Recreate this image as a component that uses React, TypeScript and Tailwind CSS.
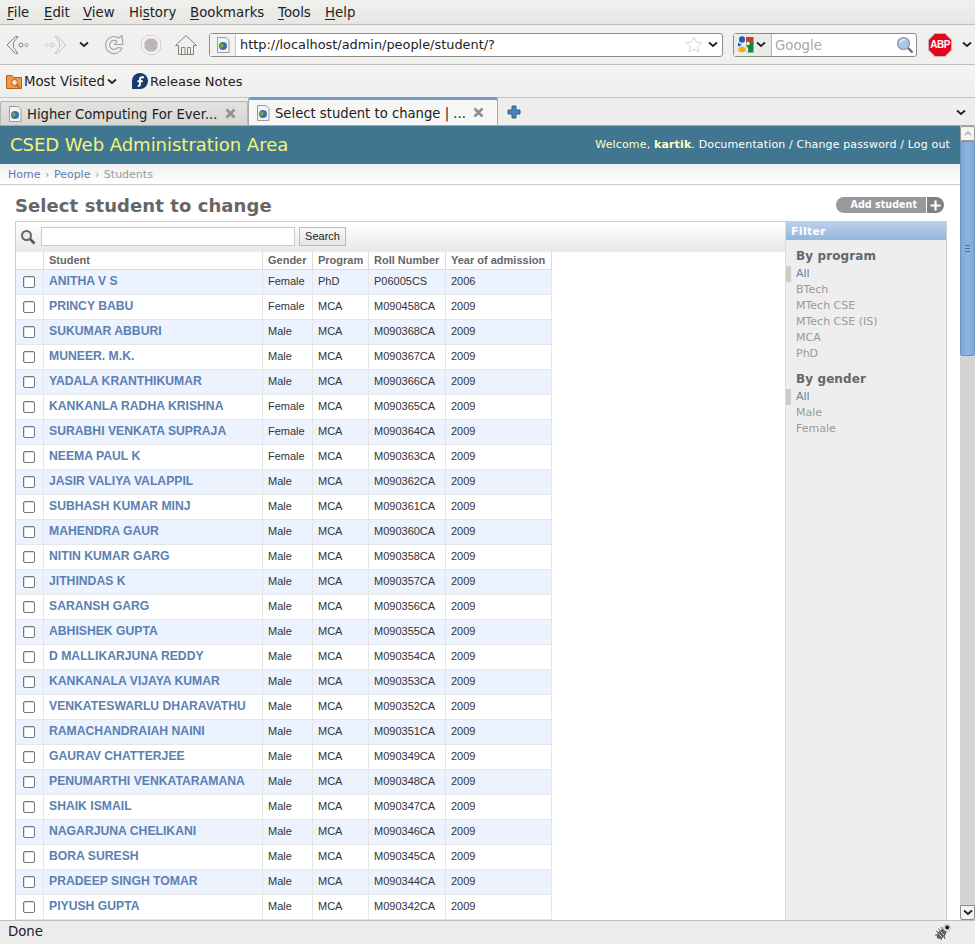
const DEJAVU = "font-['DejaVu_Sans',sans-serif]"

const MENU = [
  { pre: "", key: "F", post: "ile", w: "w-[37px]" },
  { pre: "", key: "E", post: "dit", w: "w-[39px]" },
  { pre: "", key: "V", post: "iew", w: "w-[46px]" },
  { pre: "Hi", key: "s", post: "tory", w: "w-[61px]" },
  { pre: "", key: "B", post: "ookmarks", w: "w-[88px]" },
  { pre: "", key: "T", post: "ools", w: "w-[47px]" },
  { pre: "", key: "H", post: "elp", w: "w-[40px]" },
]

const STUDENTS: [string, string, string, string, string][] = [
  ["ANITHA V S", "Female", "PhD", "P06005CS", "2006"],
  ["PRINCY BABU", "Female", "MCA", "M090458CA", "2009"],
  ["SUKUMAR ABBURI", "Male", "MCA", "M090368CA", "2009"],
  ["MUNEER. M.K.", "Male", "MCA", "M090367CA", "2009"],
  ["YADALA KRANTHIKUMAR", "Male", "MCA", "M090366CA", "2009"],
  ["KANKANLA RADHA KRISHNA", "Female", "MCA", "M090365CA", "2009"],
  ["SURABHI VENKATA SUPRAJA", "Female", "MCA", "M090364CA", "2009"],
  ["NEEMA PAUL K", "Female", "MCA", "M090363CA", "2009"],
  ["JASIR VALIYA VALAPPIL", "Male", "MCA", "M090362CA", "2009"],
  ["SUBHASH KUMAR MINJ", "Male", "MCA", "M090361CA", "2009"],
  ["MAHENDRA GAUR", "Male", "MCA", "M090360CA", "2009"],
  ["NITIN KUMAR GARG", "Male", "MCA", "M090358CA", "2009"],
  ["JITHINDAS K", "Male", "MCA", "M090357CA", "2009"],
  ["SARANSH GARG", "Male", "MCA", "M090356CA", "2009"],
  ["ABHISHEK GUPTA", "Male", "MCA", "M090355CA", "2009"],
  ["D MALLIKARJUNA REDDY", "Male", "MCA", "M090354CA", "2009"],
  ["KANKANALA VIJAYA KUMAR", "Male", "MCA", "M090353CA", "2009"],
  ["VENKATESWARLU DHARAVATHU", "Male", "MCA", "M090352CA", "2009"],
  ["RAMACHANDRAIAH NAINI", "Male", "MCA", "M090351CA", "2009"],
  ["GAURAV CHATTERJEE", "Male", "MCA", "M090349CA", "2009"],
  ["PENUMARTHI VENKATARAMANA", "Male", "MCA", "M090348CA", "2009"],
  ["SHAIK ISMAIL", "Male", "MCA", "M090347CA", "2009"],
  ["NAGARJUNA CHELIKANI", "Male", "MCA", "M090346CA", "2009"],
  ["BORA SURESH", "Male", "MCA", "M090345CA", "2009"],
  ["PRADEEP SINGH TOMAR", "Male", "MCA", "M090344CA", "2009"],
  ["PIYUSH GUPTA", "Male", "MCA", "M090342CA", "2009"],
]

function Chevron({ className = "" }: { className?: string }) {
  return (
    <svg width="10" height="7" viewBox="0 0 10 7" className={className}>
      <path d="M1 1.5 L5 5 L9 1.5" fill="none" stroke="#222" strokeWidth="1.8" />
    </svg>
  )
}

function Favicon() {
  return (
    <svg width="14" height="16" viewBox="0 0 14 16" className="shrink-0">
      <path d="M1.5 .5H10L13 3.5V15.5H1.5Z" fill="#f4f4f2" stroke="#9a9a96" />
      <circle cx="7" cy="9" r="4" fill="#3f6fa8" />
      <path d="M5 6.5c2 0 3 1 2.5 2.5S5 10 5.5 11.5C4 10.5 3.5 8 5 6.5Z" fill="#7fa83f" />
    </svg>
  )
}

function BackIcon() {
  return (
    <svg width="24" height="20" viewBox="0 0 24 20">
      <path d="M9.5 1.5 L1 10 L9.5 18.5 L12 18.5 L7.5 12.5 L7.5 7.5 L12 1.5Z" fill="#e8e8e6" stroke="#84847f" strokeLinejoin="round" />
      <path d="M3.5 10 L8 5 M3.5 10 L8 15" stroke="#fff" strokeWidth="1" />
      <circle cx="15" cy="10" r="2" fill="#f2f2f0" stroke="#84847f" />
      <circle cx="20.5" cy="10" r="1.6" fill="none" stroke="#a0a09c" />
    </svg>
  )
}

function ForwardIcon() {
  return (
    <svg width="24" height="20" viewBox="0 0 24 20">
      <path d="M14.5 1.5 L23 10 L14.5 18.5 L12 18.5 L16.5 12.5 L16.5 7.5 L12 1.5Z" fill="#ececea" stroke="#c6c6c2" strokeLinejoin="round" />
      <circle cx="9" cy="10" r="2" fill="none" stroke="#c6c6c2" />
      <circle cx="3.5" cy="10" r="1.6" fill="none" stroke="#d2d2ce" />
    </svg>
  )
}

function ReloadIcon() {
  return (
    <svg width="22" height="22" viewBox="0 0 22 22">
      <path d="M19 14A8.5 8.5 0 1 1 16 4.2L19 1.5L20 10.5H11.5L14.2 7.6A4.5 4.5 0 1 0 14.8 13.5Z" fill="#f0f0ee" stroke="#a2a29e" strokeWidth="1.1" strokeLinejoin="round" />
    </svg>
  )
}

function StopIcon() {
  return (
    <svg width="22" height="22" viewBox="0 0 22 22">
      <path d="M7 1.5H15L20.5 7V15L15 20.5H7L1.5 15V7Z" fill="#f4f4f2" stroke="#d4d0d0" />
      <path d="M8 4.5H14L17.5 8V14L14 17.5H8L4.5 14V8Z" fill="#bcb6b6" />
    </svg>
  )
}

function HomeIcon() {
  return (
    <svg width="22" height="22" viewBox="0 0 22 22">
      <path d="M.5 11.5 L11 1.5 L21.5 11.5 L18.5 11.5 L18.5 20.5 L3.5 20.5 L3.5 11.5Z" fill="#f0f0ee" stroke="#84847f" strokeLinejoin="round" />
      <path d="M6.5 20V13.5H10V20M12.5 20V13.5H15.5V20" fill="none" stroke="#84847f" />
    </svg>
  )
}

function FolderIcon() {
  return (
    <svg width="16" height="16" viewBox="0 0 16 16" className="shrink-0">
      <path d="M.5 2.5H6L7.5 4.5H15.5V15.5H.5Z" fill="#ee9a45" stroke="#b4601c" />
      <circle cx="8.5" cy="9.5" r="3" fill="#fbe3c4" stroke="#b4501c" />
      <path d="M10.5 11.5 L13.5 14.5" stroke="#b4501c" strokeWidth="1.5" />
    </svg>
  )
}

function FedoraIcon() {
  return (
    <svg width="16" height="16" viewBox="0 0 16 16" className="shrink-0">
      <circle cx="8" cy="8" r="8" fill="#1b3a6e" />
      <path d="M0 16H8V8H0Z" fill="#1b3a6e" />
      <path d="M12 4.2H10.2C8.8 4.2 8 5 8 6.4V11C8 12.2 7 13 5.8 13M5.5 8.2H10.8" fill="none" stroke="#fff" strokeWidth="1.9" />
    </svg>
  )
}

function GoogleIcon() {
  return (
    <svg width="17" height="17" viewBox="0 0 17 17" className="shrink-0">
      <ellipse cx="5" cy="3.5" rx="3" ry="3.3" fill="#1a5fc0" />
      <path d="M9 1H16.5V8H9Z" fill="#d8392b" />
      <path d="M1 6.5L5 9L1 10.5Z" fill="#1a5fc0" />
      <path d="M10 6H16.5V16.5H10.5C12 14 11 11 9 10Z" fill="#12893a" />
      <circle cx="11" cy="7.5" r="1.7" fill="#fff" />
      <ellipse cx="5" cy="13.5" rx="3.8" ry="2.7" fill="#eeb020" />
    </svg>
  )
}

function SearchGlass() {
  return (
    <svg width="18" height="18" viewBox="0 0 18 18">
      <circle cx="7.5" cy="7.5" r="6" fill="#a9c8ea" stroke="#8a9aa8" strokeWidth="1.2" />
      <path d="M4.5 6.5A3.5 3.5 0 0 1 9 4" fill="none" stroke="#e8f2fb" strokeWidth="1.4" />
      <path d="M12 12 L16.5 16.5" stroke="#6a6a6a" strokeWidth="2.4" />
    </svg>
  )
}

function AbpIcon() {
  return (
    <div className="relative flex h-6 w-6 items-center justify-center">
      <svg width="24" height="24" viewBox="0 0 24 24" className="absolute inset-0">
        <path d="M7 .5H17L23.5 7V17L17 23.5H7L.5 17V7Z" fill="#e8021b" stroke="#bbb" />
      </svg>
      <span className="relative text-[10px] leading-none font-bold tracking-[-0.5px] text-white font-['Liberation_Sans',sans-serif]">ABP</span>
    </div>
  )
}

function StatusBug() {
  return (
    <svg width="17" height="17" viewBox="0 0 17 17">
      <path d="M2 7 L6 10 M4 4.5 L8 8 M7 3 L9 6 M1 11 L4 11 M3 14 L6 13 M7 16 L8 13 M11 15 L10 12" stroke="#555" strokeWidth="1" />
      <ellipse cx="7.5" cy="10" rx="5.8" ry="3.6" transform="rotate(-45 7.5 10)" fill="#5f5f5f" />
      <path d="M4.5 9.5 L8 13 M6.5 7.5 L10 11" stroke="#d0d0d0" />
      <circle cx="13" cy="4" r="3.4" fill="#eee" stroke="#999" strokeWidth=".6" />
      <circle cx="13.2" cy="3.6" r="2" fill="#111" />
    </svg>
  )
}

function Tab({ title, active = false }: { title: string; active?: boolean }) {
  return (
    <div
      className={
        active
          ? "relative z-10 flex h-[28px] w-[250px] items-center gap-[5px] rounded-t-[3px] border-x border-[#a8a8a4] border-t-[3px] border-t-[#6f9ccc] bg-[#f6f6f5] pl-[7px]"
          : "mt-[3px] flex h-[24px] w-[248px] items-center gap-[5px] rounded-t-[2px] border border-b-0 border-[#b4b4b0] bg-gradient-to-b from-[#e2e2e0] to-[#d6d6d3] pl-[7px]"
      }
    >
      <Favicon />
      <span className="w-[193px] pt-[2px] text-[13.2px] whitespace-nowrap text-[#222]">{title}</span>
      <svg width="11" height="11" viewBox="0 0 11 11" className="shrink-0">
        <path d="M1.5 1.5 L9.5 9.5 M9.5 1.5 L1.5 9.5" stroke="#8f8f8b" strokeWidth="2.6" />
      </svg>
    </div>
  )
}

function BrowserChrome() {
  return (
    <div className={`${DEJAVU} shrink-0 text-[#222]`}>
      <div className="flex h-[25px] items-center border-b border-[#bdbdb9] bg-gradient-to-b from-[#f0f0ee] to-[#e6e6e4] pt-[2px] pl-[7px] text-[13.3px]">
        {MENU.map((m) => (
          <span key={m.pre + m.key} className={m.w}>
            {m.pre}
            <span className="underline underline-offset-2">{m.key}</span>
            {m.post}
          </span>
        ))}
      </div>

      <div className="flex h-[40px] items-center border-b border-[#bdbdb9] bg-[#f0f0ee]">
        <div className="flex w-[209px] items-center pl-[6px]">
          <BackIcon />
          <div className="ml-[13px]"><ForwardIcon /></div>
          <Chevron className="ml-[12px]" />
          <div className="ml-[14px]"><ReloadIcon /></div>
          <div className="ml-[15px]"><StopIcon /></div>
          <div className="ml-[13px]"><HomeIcon /></div>
        </div>
        <div className="flex h-[24px] w-[514px] items-center rounded-[3px] border border-[#8c8c88] bg-white">
          <div className="flex h-full w-[26px] items-center justify-center border-r border-[#c8c8c4] bg-[#f2f2f0]">
            <Favicon />
          </div>
          <span className="ml-[4px] flex-1 text-[12.9px] text-[#222]">http://localhost/admin/people/student/?</span>
          <svg width="18" height="17" viewBox="0 0 18 17" className="mr-[5px]">
            <path d="M9 1 L11.3 6.2 L17 6.8 L12.7 10.5 L14 16 L9 13.2 L4 16 L5.3 10.5 L1 6.8 L6.7 6.2Z" fill="#fff" stroke="#d8d8d6" />
          </svg>
          <Chevron className="mr-[4px]" />
        </div>
        <div className="ml-[10px] flex h-[24px] w-[184px] items-center rounded-[3px] border border-[#8c8c88] bg-white">
          <div className="flex h-full w-[38px] items-center gap-[2px] border-r border-[#b4b4b0] bg-[#ebebe9] pl-[3px]">
            <GoogleIcon />
            <Chevron />
          </div>
          <span className="ml-[3px] flex-1 pt-[2px] text-[13.3px] text-[#a8a8a8]">Google</span>
          <div className="mr-[2px]"><SearchGlass /></div>
        </div>
        <div className="ml-[11px]"><AbpIcon /></div>
        <Chevron className="ml-[10px]" />
      </div>

      <div className="flex h-[33px] items-center border-b border-[#c4c4c0] bg-gradient-to-b from-[#f4f4f2] to-[#eeeeec] pl-[6px] text-[13.3px]">
        <FolderIcon />
        <span className="ml-[2px] pt-[2px]">Most Visited</span>
        <Chevron className="ml-[2px]" />
        <div className="ml-[15px]"><FedoraIcon /></div>
        <span className="ml-[2px] pt-[1px] text-[13px]">Release Notes</span>
      </div>

      <div className="relative flex h-[28px] items-end border-b border-[#a8a8a4] bg-[#eeeeec]">
        <Tab title="Higher Computing For Ever..." />
        <Tab title="Select student to change | ..." active />
        <svg width="14" height="14" viewBox="0 0 14 14" className="mb-[6px] ml-[9px]">
          <path d="M5 1H9V5H13V9H9V13H5V9H1V5H5Z" fill="#4a7fc0" stroke="#35608f" />
        </svg>
        <Chevron className="absolute top-[11px] right-[9px]" />
      </div>
    </div>
  )
}

function ScrollBar() {
  return (
    <div className="flex w-[15px] shrink-0 flex-col bg-[#d4d4d2]">
      <div className="flex h-[15px] items-center justify-center rounded-t-[3px] border border-[#9a9a96] bg-[#f4f4f2]">
        <svg width="8" height="5" viewBox="0 0 8 5"><path d="M1 4 L4 1 L7 4" fill="none" stroke="#aaa" strokeWidth="1.4" /></svg>
      </div>
      <div className="flex h-[215px] items-center justify-center rounded-b-[2px] border border-[#6f95c4] bg-gradient-to-r from-[#7ea6d8] via-[#8fb4e0] to-[#7ea6d8]">
        <div className="flex flex-col gap-[2px]">
          <div className="h-px w-[5px] bg-[#3f6ea8]" />
          <div className="h-px w-[5px] bg-[#3f6ea8]" />
          <div className="h-px w-[5px] bg-[#3f6ea8]" />
        </div>
      </div>
      <div className="flex-1" />
      <div className="flex h-[15px] items-center justify-center rounded-b-[3px] border border-[#8c8c88] bg-[#f4f4f2]">
        <Chevron />
      </div>
    </div>
  )
}

function FilterGroup({ title, items, className = "" }: { title: string; items: string[]; className?: string }) {
  return (
    <div className={className}>
      <h3 className="pl-[10px] text-[12px] leading-[16px] font-bold tracking-[0.1px] text-[#666]">{title}</h3>
      <ul className="mt-[2px]">
        {items.map((item, i) => (
          <li
            key={item}
            className={
              i === 0
                ? "h-[16px] border-l-[5px] border-[#ccc] pl-[5px] text-[11px] leading-[16px] text-[#5b80b2]"
                : "h-[16px] pl-[10px] text-[11px] leading-[16px] text-[#999]"
            }
          >
            {item}
          </li>
        ))}
      </ul>
    </div>
  )
}

function StudentTable() {
  const th = "h-[18px] border-r border-b border-[#ddd] pl-[5px] text-left align-middle text-[11px] font-bold text-[#666]"
  const td = "border-r border-b border-[#e6e6e6] pb-[2px] pl-[5px] align-middle text-[11px] text-[#333]"
  return (
    <table className="table-fixed border-separate border-spacing-0 font-['Liberation_Sans',sans-serif]">
      <thead>
        <tr>
          <th className={`${th} w-[28px]`} />
          <th className={`${th} w-[219px]`}>Student</th>
          <th className={`${th} w-[50px]`}>Gender</th>
          <th className={`${th} w-[56px]`}>Program</th>
          <th className={`${th} w-[77px]`}>Roll Number</th>
          <th className={`${th} w-[106px]`}>Year of admission</th>
        </tr>
      </thead>
      <tbody>
        {STUDENTS.map((s, i) => (
          <tr key={s[3]} className={i % 2 === 0 ? "h-[25px] bg-[#edf3fe]" : "h-[25px] bg-white"}>
            <td className="border-r border-b border-[#e6e6e6] pl-[7px] align-middle">
              <div className="h-[12px] w-[12px] rounded-[2px] border border-[#777] bg-white shadow-[inset_1px_1px_0_#ddd]" />
            </td>
            <td className="border-r border-b border-[#e6e6e6] pb-[2px] pl-[5px] align-middle text-[12.2px] font-bold text-[#5b80b2]">{s[0]}</td>
            <td className={td}>{s[1]}</td>
            <td className={td}>{s[2]}</td>
            <td className={td}>{s[3]}</td>
            <td className={td}>{s[4]}</td>
          </tr>
        ))}
      </tbody>
    </table>
  )
}

function AdminPage() {
  return (
    <div className={`${DEJAVU} min-w-0 flex-1 overflow-hidden bg-white`}>
      <div className="flex h-[38px] items-center justify-between bg-[#417690] px-[10px] pb-[2px]">
        <span className="text-[18px] tracking-[-0.02px] text-[#f4f379]">CSED Web Administration Area</span>
        <span className="pt-[2px] text-[11px] tracking-[0.15px] text-[#ffc]">
          Welcome, <strong>kartik</strong>. <span className="text-white">Documentation / Change password / Log out</span>
        </span>
      </div>
      <div className="flex h-[21px] items-center border-b border-[#ccc] bg-gradient-to-b from-[#f0f0f0] to-white pt-[2px] pl-[8px] text-[11px] text-[#999]">
        <span className="text-[#5b80b2]">Home</span>
        <span className="mx-[4.5px]">›</span>
        <span className="text-[#5b80b2]">People</span>
        <span className="mx-[4.5px]">›</span>
        <span>Students</span>
      </div>

      <div className="flex h-[36px] items-start justify-between pr-[16px] pl-[15px]">
        <h1 className="mt-[9px] text-[18px] leading-[24px] font-bold tracking-[0.08px] text-[#666]">Select student to change</h1>
        <div className="mt-[12px] flex h-[16px]">
          <span className="flex w-[90px] items-center justify-end rounded-l-full bg-[#999] pr-[9px] text-[9.6px] font-bold text-white">Add student</span>
          <span className="ml-px flex w-[17px] items-center justify-center rounded-r-full bg-[#808080]">
            <svg width="11" height="11" viewBox="0 0 11 11"><path d="M5.5 .5V10.5M.5 5.5H10.5" stroke="#fff" strokeWidth="2.2" /></svg>
          </span>
        </div>
      </div>

      <div className="mr-[13px] ml-[15px] flex border-x border-t border-[#ccc]">
        <div className="min-w-0 flex-1">
          <div className="flex h-[30px] items-center border-b border-[#eee] bg-gradient-to-b from-white to-[#e8e8e8] font-['Liberation_Sans',sans-serif]">
            <svg width="16" height="16" viewBox="0 0 16 16" className="ml-[4px]">
              <circle cx="6.5" cy="6.5" r="4.5" fill="#eee" stroke="#666" strokeWidth="2" />
              <path d="M10 10 L14.5 14.5" stroke="#555" strokeWidth="2.6" />
            </svg>
            <div className="ml-[5px] h-[19px] w-[254px] border border-[#ccc] bg-white" />
            <div className="ml-[4px] flex h-[19px] w-[47px] items-center justify-center border border-[#bbb] bg-gradient-to-b from-[#f8f8f8] to-[#e4e4e4] text-[11px] text-[#222]">Search</div>
          </div>
          <StudentTable />
        </div>
        <aside className="h-[800px] w-[161px] shrink-0 border-l border-[#ddd] bg-[#eee]">
          <div className="h-[18px] bg-gradient-to-b from-[#bcd0e8] to-[#95b6da] pl-[5px] text-[11px] leading-[20px] font-bold tracking-[0.3px] text-white">Filter</div>
          <FilterGroup className="mt-[8px]" title="By program" items={["All", "BTech", "MTech CSE", "MTech CSE (IS)", "MCA", "PhD"]} />
          <FilterGroup className="mt-[9px]" title="By gender" items={["All", "Male", "Female"]} />
        </aside>
      </div>
    </div>
  )
}

export default function App() {
  return (
    <div className="flex h-[944px] w-[975px] flex-col overflow-hidden bg-[#ededeb]">
      <BrowserChrome />
      <div className="flex min-h-0 flex-1">
        <AdminPage />
        <ScrollBar />
      </div>
      <div className={`${DEJAVU} relative flex h-[24px] shrink-0 items-center border-t border-[#bdbdb9] bg-[#ededeb] pb-[2px] pl-[8px] text-[13.3px] text-[#222]`}>
        Done
        <div className="absolute top-[3px] right-[24px]"><StatusBug /></div>
      </div>
    </div>
  )
}
